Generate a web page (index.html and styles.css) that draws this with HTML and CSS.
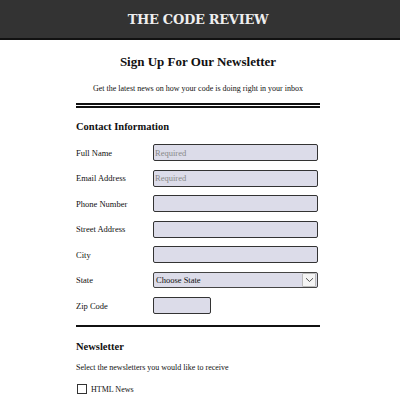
FILE: index.html
```html
<!DOCTYPE html>
<html>
<head>
<meta charset="utf-8">
<link rel="stylesheet" href="styles.css">
</head>
<body>
<header class="masthead"><h1 class="brand">THE CODE REVIEW</h1></header>
<div class="page">
  <main class="content">
    <h2 class="title">Sign Up For Our Newsletter</h2>
    <p class="intro">Get the latest news on how your code is doing right in your inbox</p>
    <div class="double-rule"></div>
    <section class="group">
      <h3 class="group-title">Contact Information</h3>
      <div class="row"><label class="label">Full Name</label><input class="field" placeholder="Required"></div>
      <div class="row"><label class="label">Email Address</label><input class="field" placeholder="Required"></div>
      <div class="row"><label class="label">Phone Number</label><input class="field"></div>
      <div class="row"><label class="label">Street Address</label><input class="field"></div>
      <div class="row"><label class="label">City</label><input class="field"></div>
      <div class="row"><label class="label">State</label>
        <div class="select"><span class="select-text">Choose State</span><span class="select-btn"><svg width="9" height="6" viewBox="0 0 9 6"><path d="M1 1.2 L4.5 4.5 L8 1.2" fill="none" stroke="#555" stroke-width="1"/></svg></span></div>
      </div>
      <div class="row"><label class="label">Zip Code</label><input class="field zip"></div>
    </section>
    <div class="rule"></div>
    <section class="group">
      <h3 class="group-title news">Newsletter</h3>
      <p class="hint">Select the newsletters you would like to receive</p>
      <div class="check-row"><span class="box"></span><span class="check-label">HTML News</span></div>
    </section>
  </main>
</div>
</body>
</html>
```
FILE: styles.css
```css
body {
  margin: 0;
  background: #fff;
  font-family: "Liberation Serif", serif;
  color: #111;
}
.masthead {
  height: 38px;
  background: #333;
  border-bottom: 2px solid #111;
  display: flex;
  align-items: center;
  justify-content: center;
  padding-right: 4px;
}
.brand {
  margin: 0;
  font-family: "DejaVu Serif", serif;
  font-weight: bold;
  font-size: 13px;
  letter-spacing: -0.3px;
  color: #eee;
}
.page {
  padding-right: 4px;
}
.content {
  width: 244px;
  margin: 0 auto;
}
.title {
  margin: 14px 0 0;
  text-align: center;
  font-size: 13px;
  font-weight: bold;
  line-height: 16px;
}
.intro {
  margin: 14px 0 0;
  text-align: center;
  font-size: 8px;
  line-height: 10px;
}
.double-rule {
  margin-top: 9px;
  height: 1px;
  border-top: 2px solid #111;
  border-bottom: 2px solid #111;
}
.group-title {
  margin: 13px 0 11px;
  font-size: 10.5px;
  line-height: 12px;
  font-weight: bold;
}
.row {
  display: flex;
  align-items: center;
  height: 17px;
  margin-bottom: 8.5px;
}
.label {
  width: 77px;
  font-size: 8.5px;
}
.field {
  box-sizing: border-box;
  width: 165px;
  height: 17px;
  margin: 0;
  padding: 0 1px;
  border: 1px solid #333;
  border-radius: 2px;
  background: #dcdce9;
  font-family: "Liberation Serif", serif;
  font-size: 8.5px;
  outline: none;
}
.field::placeholder {
  color: #888;
}
.field.zip {
  width: 58px;
}
.select {
  box-sizing: border-box;
  width: 165px;
  height: 16px;
  border: 1px solid #444;
  border-radius: 2px;
  background: #dcdce9;
  display: flex;
  align-items: center;
}
.select-text {
  flex: 1;
  padding-left: 2px;
  font-size: 8.5px;
}
.select-btn {
  width: 12px;
  height: 12px;
  margin-right: 1px;
  border: 1px solid #bbb;
  border-radius: 1px;
  background: #f5f5f5;
  display: flex;
  align-items: center;
  justify-content: center;
}
.rule {
  margin-top: 11px;
  border-top: 2px solid #111;
}
.group-title.news {
  margin: 14px 0 10px;
}
.hint {
  margin: 0;
  font-size: 8px;
  line-height: 10px;
}
.check-row {
  display: flex;
  align-items: center;
  margin-top: 11px;
}
.box {
  box-sizing: border-box;
  width: 10px;
  height: 10px;
  margin-left: 1px;
  border: 1px solid #333;
}
.check-label {
  margin-left: 4px;
  font-size: 8px;
}
```
